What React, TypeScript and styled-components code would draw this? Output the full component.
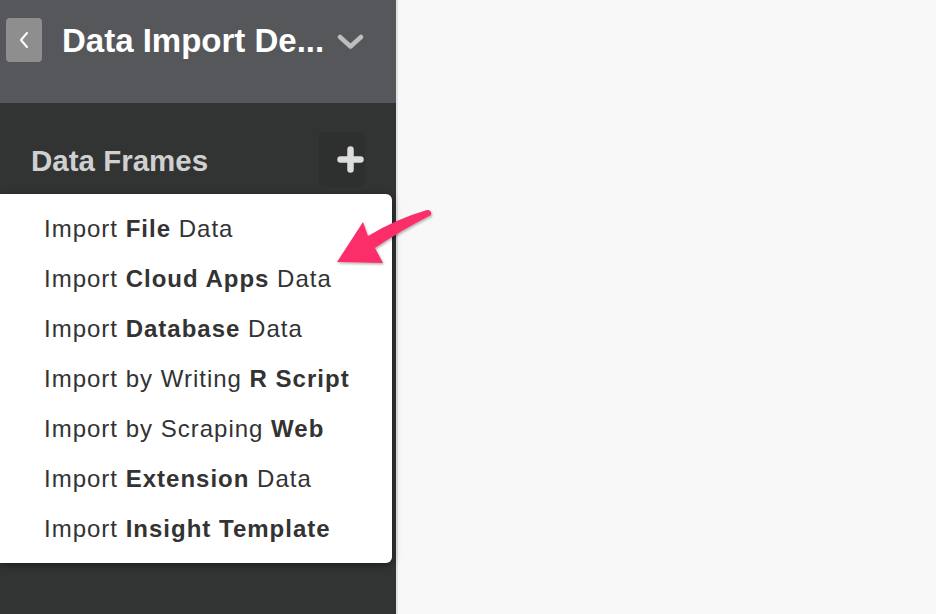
import React from "react";
import styled, { createGlobalStyle } from "styled-components";

const Global = createGlobalStyle`
  html, body { margin: 0; padding: 0; height: 100%; }
  body { font-family: "Liberation Sans", Arial, sans-serif; background: #f8f8f8; }
  #root { height: 100%; }
`;

const Page = styled.div`
  display: flex;
  width: 936px;
  height: 614px;
  position: relative;
  overflow: hidden;
`;

const Sidebar = styled.aside`
  width: 396px;
  flex: none;
  display: flex;
  flex-direction: column;
  background: #323333;
  border-right: 2px solid #e2e2e2;
  position: relative;
`;

const Main = styled.main`
  flex: 1;
  background: #f8f8f8;
`;

const Header = styled.header`
  height: 103px;
  background: #56575a;
  display: flex;
  align-items: flex-start;
  padding: 18px 0 0 6px;
  box-sizing: border-box;
`;

const BackButton = styled.div`
  width: 36px;
  height: 44px;
  border-radius: 4px;
  background: #8e8e8e;
  display: flex;
  align-items: center;
  justify-content: center;
  flex: none;
`;

const Title = styled.h1`
  margin: 0 0 0 20px;
  color: #fff;
  font-size: 33px;
  font-weight: 700;
  line-height: 46px;
  white-space: nowrap;
`;

const Caret = styled.div`
  margin: 16px 0 0 13px;
  display: flex;
`;

const SectionRow = styled.div`
  display: flex;
  align-items: center;
  justify-content: space-between;
  padding: 29px 31px 0 31px;
`;

const SectionTitle = styled.h2`
  margin: 3px 0 0 0;
  color: #d0d0d0;
  font-size: 29.5px;
  font-weight: 700;
`;

const AddButton = styled.div`
  width: 46px;
  height: 55px;
  box-sizing: border-box;
  border-radius: 5px;
  background: #2e2f2f;
  display: flex;
  align-items: center;
  justify-content: flex-end;
  padding-right: 1px;
`;

const Menu = styled.ul`
  position: absolute;
  left: 0;
  top: 194px;
  width: 392px;
  height: 369px;
  margin: 0;
  padding: 10px 0 0 0;
  box-sizing: border-box;
  list-style: none;
  background: #fff;
  border-radius: 0 6px 6px 0;
  box-shadow: 0 2px 8px rgba(0, 0, 0, 0.45);
  z-index: 2;
`;

const MenuItem = styled.li`
  height: 50px;
  line-height: 50px;
  padding-left: 44px;
  font-size: 24px;
  letter-spacing: 1px;
  color: #333;
  white-space: nowrap;
  b { font-weight: 700; }
`;

const Arrow = styled.svg`
  position: absolute;
  left: 330px;
  top: 205px;
  z-index: 3;
  overflow: visible;
`;

const items: [string, string, string][] = [
  ["Import ", "File", " Data"],
  ["Import ", "Cloud Apps", " Data"],
  ["Import ", "Database", " Data"],
  ["Import by Writing ", "R Script", ""],
  ["Import by Scraping ", "Web", ""],
  ["Import ", "Extension", " Data"],
  ["Import ", "Insight Template", ""],
];

export default function App() {
  return (
    <>
      <Global />
      <Page>
        <Sidebar>
          <Header>
            <BackButton>
              <svg width="14" height="22" viewBox="0 0 14 22">
                <path d="M10 4 L4 11 L10 18" fill="none" stroke="#fff" strokeWidth="2" strokeLinecap="round" strokeLinejoin="round" />
              </svg>
            </BackButton>
            <Title>Data Import De...</Title>
            <Caret>
              <svg width="27" height="16" viewBox="0 0 27 16">
                <path d="M3 3 L13.5 12.5 L24 3" fill="none" stroke="#bdbdbd" strokeWidth="4.5" strokeLinecap="round" strokeLinejoin="round" />
              </svg>
            </Caret>
          </Header>
          <SectionRow>
            <SectionTitle>Data Frames</SectionTitle>
            <AddButton>
              <svg width="27" height="27" viewBox="0 0 27 27">
                <path d="M13.5 3.5 V23.5 M3.5 13.5 H23.5" fill="none" stroke="#dcdcdc" strokeWidth="6.5" strokeLinecap="round" />
              </svg>
            </AddButton>
          </SectionRow>
          <Menu>
            {items.map(([a, b, c], i) => (
              <MenuItem key={i}>
                {a}
                <b>{b}</b>
                {c}
              </MenuItem>
            ))}
          </Menu>
        </Sidebar>
        <Main />
        <Arrow width="110" height="70" viewBox="0 0 110 70">
          <defs>
            <filter id="sh" x="-20%" y="-20%" width="140%" height="140%">
              <feDropShadow dx="1" dy="1.5" stdDeviation="1.2" floodColor="#000" floodOpacity="0.3" />
            </filter>
          </defs>
          <path
            d="M97 5 Q102 5 101 10 Q70 26 45 43 L53 58 L7 57 L33 17 L38 31 Q66 14 97 5 Z"
            fill="#fb2e6a"
            filter="url(#sh)"
          />
        </Arrow>
      </Page>
    </>
  );
}
